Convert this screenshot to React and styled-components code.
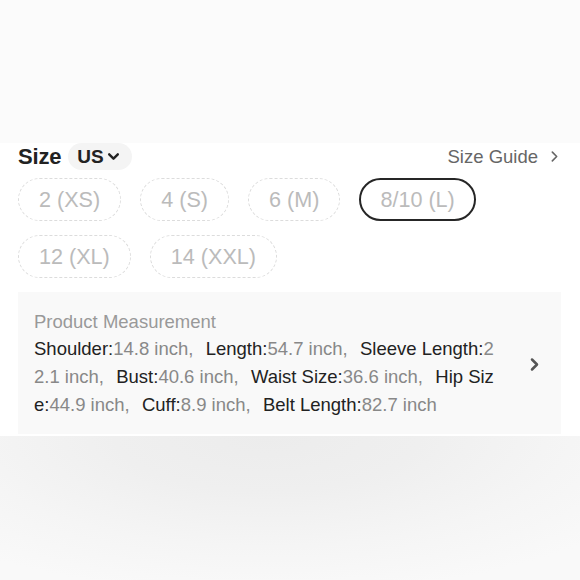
import React from "react";
import styled, { createGlobalStyle } from "styled-components";

const GlobalStyle = createGlobalStyle`
  html, body { margin: 0; padding: 0; background: #ffffff; }
  body { font-family: "Liberation Sans", Arial, Helvetica, sans-serif; }
  * { box-sizing: border-box; }
`;

const Page = styled.div`
  display: flex;
  flex-direction: column;
  width: 580px;
  height: 580px;
  overflow: hidden;
`;

const TopBand = styled.div`
  height: 143px;
  flex: none;
  background: #fbfbfb;
`;

const Section = styled.section`
  background: #ffffff;
  padding: 0 19px 2px 18px;
  flex: none;
`;

const Header = styled.div`
  display: flex;
  align-items: center;
  justify-content: space-between;
  height: 27px;
`;

const TitleGroup = styled.div`
  display: flex;
  align-items: center;
  gap: 7px;
`;

const Title = styled.span`
  font-size: 22px;
  font-weight: 700;
  color: #222;
  letter-spacing: -0.2px;
`;

const UnitPill = styled.button`
  display: flex;
  align-items: center;
  gap: 3px;
  height: 27px;
  padding: 0 12px 0 9px;
  border: none;
  border-radius: 14px;
  background: #f4f4f4;
  font-family: inherit;
  font-size: 19px;
  font-weight: 700;
  color: #222;
`;

const GuideLink = styled.a`
  display: flex;
  align-items: center;
  gap: 10px;
  font-size: 18.5px;
  color: #666;
  text-decoration: none;
`;

const Options = styled.div`
  display: flex;
  flex-wrap: wrap;
  gap: 14px 19px;
  margin-top: 8px;
  width: 470px;
`;

const Option = styled.button`
  height: 43px;
  padding: 0 ${(p) => (p.$selected ? 19 : 20)}px;
  border: ${(p) => (p.$selected ? "2px solid #262626" : "1px dashed #dcdcdc")};
  border-radius: 22px;
  background: transparent;
  font-family: inherit;
  font-size: 21.6px;
  color: #bbbbbb;
  white-space: nowrap;
`;

const MeasureBox = styled.div`
  display: flex;
  align-items: center;
  margin-top: 14px;
  padding: 19px 19px 15px 16px;
  background: #f9f9f9;
`;

const MeasureBody = styled.div`
  width: 466px;
  flex: none;
`;

const MeasureTitle = styled.div`
  font-size: 18.5px;
  line-height: 22px;
  color: #999;
  margin-bottom: 2px;
`;

const MeasureText = styled.div`
  font-size: 18.5px;
  line-height: 28px;
  color: #222;
  word-break: break-all;
`;

const Value = styled.span`
  color: #888;
`;

const Sep = styled.span`
  color: #888;
  padding-right: 2px;
`;

const ChevronCell = styled.div`
  flex: 1;
  display: flex;
  justify-content: flex-end;
  padding-bottom: 2px;
`;

const Bottom = styled.div`
  flex: 1;
  background: radial-gradient(ellipse 75% 110% at 46% 0%, #ececec 0%, #efefef 35%, #f5f5f5 70%, #f9f9f9 100%);
`;

const Chevron = ({ size = 12, color = "#666", width = 1.6, down }) => (
  <svg width={size} height={size} viewBox="0 0 12 12" fill="none">
    <path
      d={down ? "M2 4 L6 8 L10 4" : "M4 2 L8 6 L4 10"}
      stroke={color}
      strokeWidth={width}
      strokeLinecap="round"
      strokeLinejoin="round"
    />
  </svg>
);

const sizes = ["2 (XS)", "4 (S)", "6 (M)", "8/10 (L)", "12 (XL)", "14 (XXL)"];

const measures = [
  ["Shoulder", "14.8 inch"],
  ["Length", "54.7 inch"],
  ["Sleeve Length", "22.1 inch"],
  ["Bust", "40.6 inch"],
  ["Waist Size", "36.6 inch"],
  ["Hip Size", "44.9 inch"],
  ["Cuff", "8.9 inch"],
  ["Belt Length", "82.7 inch"],
];

export default function App() {
  return (
    <>
      <GlobalStyle />
      <Page>
        <TopBand />
        <Section>
          <Header>
            <TitleGroup>
              <Title>Size</Title>
              <UnitPill>
                US
                <Chevron size={13} color="#222" width={2.2} down />
              </UnitPill>
            </TitleGroup>
            <GuideLink>
              Size Guide
              <Chevron size={13} color="#666" width={1.5} />
            </GuideLink>
          </Header>
          <Options>
            {sizes.map((s) => (
              <Option key={s} $selected={s === "8/10 (L)"}>
                {s}
              </Option>
            ))}
          </Options>
          <MeasureBox>
            <MeasureBody>
              <MeasureTitle>Product Measurement</MeasureTitle>
              <MeasureText>
                {measures.map(([k, v], i) => (
                  <React.Fragment key={k}>
                    {k}:<Value>{v}</Value>
                    {i < measures.length - 1 && <Sep>,{"\u00a0 "}</Sep>}
                  </React.Fragment>
                ))}
              </MeasureText>
            </MeasureBody>
            <ChevronCell>
              <Chevron size={15} color="#555" width={2} />
            </ChevronCell>
          </MeasureBox>
        </Section>
        <Bottom />
      </Page>
    </>
  );
}
